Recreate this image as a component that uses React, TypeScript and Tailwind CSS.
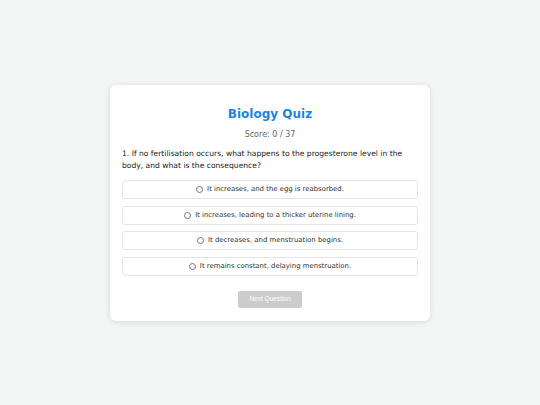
import React from 'react';

const options = [
  'It increases, and the egg is reabsorbed.',
  'It increases, leading to a thicker uterine lining.',
  'It decreases, and menstruation begins.',
  'It remains constant, delaying menstruation.',
];

export default function App() {
  return (
    <div className="min-h-[405px] w-full bg-[#f4f5f5] flex items-start justify-center pt-[85px] font-['DejaVu_Sans',sans-serif]">
      <div className="w-[320px] bg-white rounded-[6px] shadow-[0_1px_6px_rgba(0,0,0,0.12)] px-[12px] pt-[20px] pb-[13px] flex flex-col">
        <h1 className="text-center text-[12px] font-bold text-[#1a85e0] leading-[18px]">Biology Quiz</h1>
        <div className="text-center text-[8px] text-[#666] mt-[6px] leading-[12px]">Score: 0 / 37</div>
        <p className="text-[7.6px] text-[#222] mt-[7px] leading-[12px]">
          1. If no fertilisation occurs, what happens to the progesterone level in the body, and what is the consequence?
        </p>
        <div className="flex flex-col gap-[6.5px] mt-[8px]">
          {options.map((o, i) => (
            <div key={i} className="h-[19px] border border-[#e6e6e6] rounded-[3px] bg-white flex items-center justify-center gap-[4px] text-[6.9px] text-[#333]">
              <span className="w-[7px] h-[7px] rounded-full border border-[#777] bg-white"></span>
              <span>{o}</span>
            </div>
          ))}
        </div>
        <div className="flex justify-center mt-[15px]">
          <button className="w-[64px] h-[17px] rounded-[2px] bg-[#cccccc] text-white text-[6.5px] font-['Liberation_Sans',sans-serif]">
            Next Question
          </button>
        </div>
      </div>
    </div>
  );
}
